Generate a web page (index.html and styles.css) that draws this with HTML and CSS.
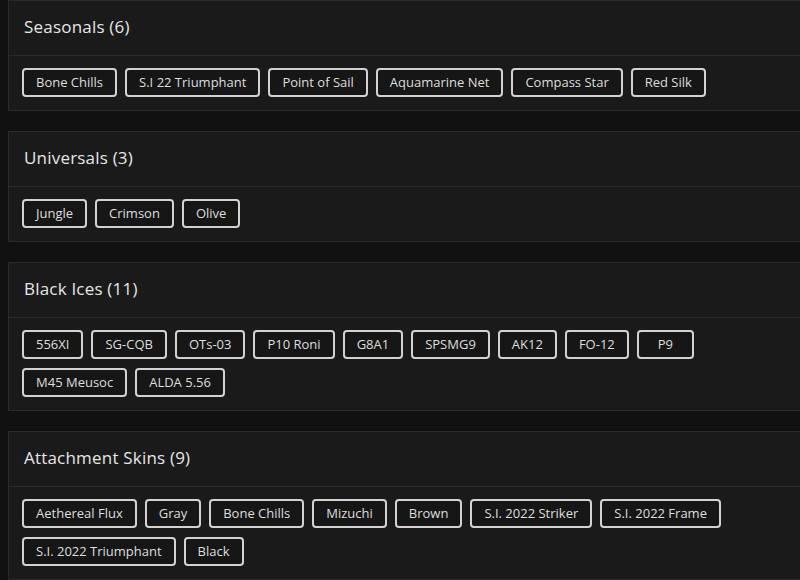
FILE: index.html
```html
<!DOCTYPE html>
<html>
<head>
<meta charset="utf-8">
<link rel="stylesheet" href="styles.css">
</head>
<body>
<div class="list">
  <section class="panel">
    <div class="panel-head"><h2 class="panel-title">Seasonals (6)</h2></div>
    <div class="panel-body">
      <span class="tag">Bone Chills</span>
      <span class="tag">S.I 22 Triumphant</span>
      <span class="tag">Point of Sail</span>
      <span class="tag">Aquamarine Net</span>
      <span class="tag">Compass Star</span>
      <span class="tag">Red Silk</span>
    </div>
  </section>
  <section class="panel">
    <div class="panel-head"><h2 class="panel-title">Universals (3)</h2></div>
    <div class="panel-body">
      <span class="tag">Jungle</span>
      <span class="tag">Crimson</span>
      <span class="tag">Olive</span>
    </div>
  </section>
  <section class="panel">
    <div class="panel-head"><h2 class="panel-title">Black Ices (11)</h2></div>
    <div class="panel-body">
      <span class="tag">556XI</span>
      <span class="tag">SG-CQB</span>
      <span class="tag">OTs-03</span>
      <span class="tag">P10 Roni</span>
      <span class="tag">G8A1</span>
      <span class="tag">SPSMG9</span>
      <span class="tag">AK12</span>
      <span class="tag">FO-12</span>
      <span class="tag tag-wide">P9</span>
      <span class="tag">M45 Meusoc</span>
      <span class="tag">ALDA 5.56</span>
    </div>
  </section>
  <section class="panel">
    <div class="panel-head"><h2 class="panel-title">Attachment Skins (9)</h2></div>
    <div class="panel-body">
      <span class="tag">Aethereal Flux</span>
      <span class="tag">Gray</span>
      <span class="tag">Bone Chills</span>
      <span class="tag">Mizuchi</span>
      <span class="tag">Brown</span>
      <span class="tag">S.I. 2022 Striker</span>
      <span class="tag">S.I. 2022 Frame</span>
      <span class="tag">S.I. 2022 Triumphant</span>
      <span class="tag">Black</span>
    </div>
  </section>
</div>
</body>
</html>
```
FILE: styles.css
```css
html, body {
  background: #111111;
}
body {
  margin: 0 0 0 8px;
  font-family: "Open Sans", "DejaVu Sans", sans-serif;
  color: #dcdcdc;
  overflow: hidden;
}
.list {
  display: flex;
  flex-direction: column;
  gap: 20px;
}
.panel {
  background: #1a1a1a;
  border: 1px solid #2b2b2b;
  border-right: 0;
}
.panel-head {
  height: 55px;
  box-sizing: border-box;
  display: flex;
  align-items: center;
  padding: 0 0 3px 15px;
  border-bottom: 1px solid #2b2b2b;
}
.panel-title {
  margin: 0;
  font-size: 17px;
  font-weight: 500;
  color: #e6e6e6;
  letter-spacing: 0.2px;
}
.panel-body {
  display: flex;
  flex-wrap: wrap;
  gap: 9px 8px;
  padding: 12px 13px 13px;
  max-width: 720px;
}
.tag {
  display: inline-block;
  height: 25px;
  line-height: 25px;
  padding: 0 12px;
  border: 2px solid #d2d2d2;
  border-radius: 4px;
  background: #161616;
  font-size: 13px;
  color: #dedede;
  white-space: nowrap;
}
.tag-wide {
  padding: 0 19px;
}
```
